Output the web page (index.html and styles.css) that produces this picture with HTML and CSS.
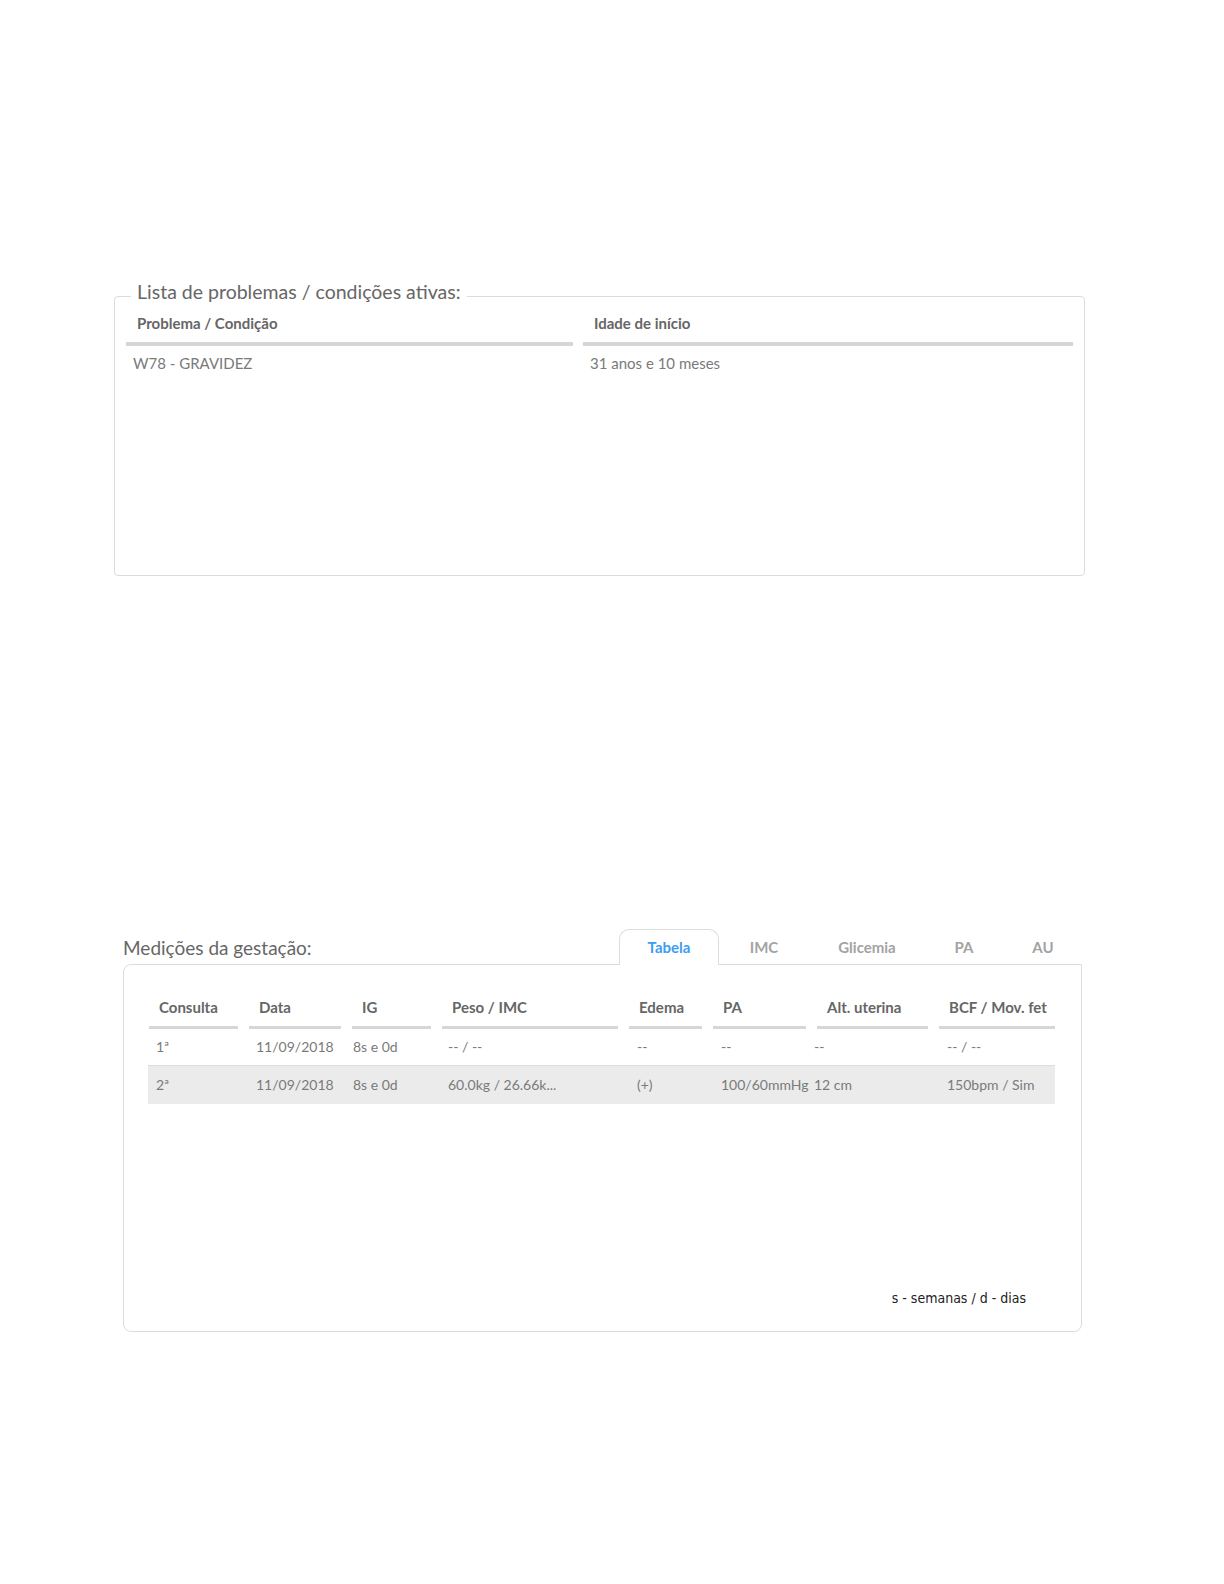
FILE: index.html
```html
<!DOCTYPE html>
<html lang="pt">
<head>
    <meta charset="UTF-8">
    <meta name="viewport" content="width=device-width, initial-scale=1.0">
    <title>Gestação</title>
    <link rel="stylesheet" href="styles.css">
</head>
<body>

    <!-- Problemas ativos -->
    <fieldset class="problems">
        <legend>Lista de problemas / condições ativas:</legend>
        <div class="problemsTable">
            <div class="headCell">Problema / Condição</div>
            <div class="headCell">Idade de início</div>
            <div class="cell">W78 - GRAVIDEZ</div>
            <div class="cell">31 anos e 10 meses</div>
        </div>
    </fieldset>

    <!-- Medições -->
    <div class="measures">
        <div class="measuresTop">
            <div class="measuresTitle">Medições da gestação:</div>
            <div class="tabs">
                <div class="tab active tabTabela">Tabela</div>
                <div class="tab tabImc">IMC</div>
                <div class="tab tabGlicemia">Glicemia</div>
                <div class="tab tabPa">PA</div>
                <div class="tab tabAu">AU</div>
            </div>
        </div>

        <div class="panel">
            <div class="gridHead">
                <div>Consulta</div>
                <div>Data</div>
                <div>IG</div>
                <div>Peso / IMC</div>
                <div>Edema</div>
                <div>PA</div>
                <div>Alt. uterina</div>
                <div>BCF / Mov. fet</div>
            </div>
            <div class="gridRow">
                <div>1ª</div>
                <div>11/09/2018</div>
                <div>8s e 0d</div>
                <div>-- / --</div>
                <div>--</div>
                <div>--</div>
                <div>--</div>
                <div>-- / --</div>
            </div>
            <div class="gridRow odd">
                <div>2ª</div>
                <div>11/09/2018</div>
                <div>8s e 0d</div>
                <div>60.0kg / 26.66k...</div>
                <div>(+)</div>
                <div>100/60mmHg</div>
                <div>12 cm</div>
                <div>150bpm / Sim</div>
            </div>

            <div class="note">s - semanas / d - dias</div>
        </div>
    </div>

</body>
</html>
```

FILE: styles.css
```css
body {
    margin: 0;
    font-family: Lato, "Open Sans", sans-serif;
    background-color: #ffffff;
    color: #666666;
}

/* Problemas / condições */
.problems {
    margin: 278px 0 0 114px;
    width: 971px;
    box-sizing: border-box;
    padding: 0 11px;
    border: 1px solid #dcdcdc;
    border-radius: 4px;
}

.problems legend {
    margin-left: 5px;
    padding: 2px 6px 10px;
    font-size: 19.5px;
    line-height: 24px;
    color: #666666;
}

.problemsTable {
    display: grid;
    grid-template-columns: 447px 1fr;
    column-gap: 10px;
    align-content: start;
    height: 261px;
}

.headCell {
    padding: 0 11px 10px;
    border-bottom: 4px solid #d6d6d6;
    font-size: 15px;
    font-weight: 700;
    line-height: 18px;
    color: #666666;
}

.cell {
    padding: 8px 7px;
    font-size: 15px;
    line-height: 18px;
    color: #7a7a7a;
}

/* Medições da gestação */
.measures {
    margin: 353px 0 0 123px;
    width: 959px;
}

.measuresTop {
    display: flex;
    justify-content: space-between;
    align-items: flex-end;
}

.measuresTitle {
    padding-bottom: 4px;
    font-size: 19px;
    line-height: 24px;
    color: #666666;
}

.tabs {
    display: flex;
    margin-right: -1px;
}

.tab {
    height: 35px;
    box-sizing: border-box;
    padding-top: 9px;
    text-align: center;
    font-size: 15px;
    font-weight: 700;
    line-height: 18px;
    color: #a3a3a3;
}

.tabTabela {
    width: 100px;
}

.tabImc {
    width: 90px;
}

.tabGlicemia {
    width: 116px;
}

.tabPa {
    width: 78px;
}

.tabAu {
    width: 80px;
}

.tab.active {
    position: relative;
    margin-bottom: -1px;
    height: 36px;
    border: 1px solid #dcdcdc;
    border-bottom: none;
    border-radius: 10px 10px 0 0;
    padding-top: 8px;
    background-color: #ffffff;
    color: #3d9df2;
}

.panel {
    display: flex;
    flex-direction: column;
    height: 368px;
    box-sizing: border-box;
    padding: 33px 26px 25px 24px;
    border: 1px solid #dcdcdc;
    border-radius: 8px 0 8px 8px;
}

.gridHead {
    display: grid;
    grid-template-columns: 89px 92px 79px 176px 73px 93px 111px 116px;
    column-gap: 11px;
    margin-left: 1px;
}

.gridHead div {
    padding: 0 10px 10px;
    border-bottom: 3px solid #d6d6d6;
    font-size: 15px;
    font-weight: 700;
    line-height: 18px;
    color: #666666;
    white-space: nowrap;
}

.gridRow {
    display: grid;
    grid-template-columns: 100px 97px 95px 189px 84px 93px 133px 116px;
    border-bottom: 1px solid #dddddd;
}

.gridRow div {
    padding: 9px 0 9px 8px;
    font-size: 14px;
    line-height: 18px;
    color: #7a7a7a;
    white-space: nowrap;
}

.gridRow.odd {
    border-bottom: none;
    background-color: #ebebeb;
}

.gridRow.odd div {
    padding-top: 10px;
    padding-bottom: 10px;
}

.note {
    margin-top: auto;
    padding-right: 29px;
    text-align: right;
    font-family: "DejaVu Sans Condensed", "DejaVu Sans", sans-serif;
    font-size: 14px;
    line-height: 16px;
    color: #222222;
}
```
